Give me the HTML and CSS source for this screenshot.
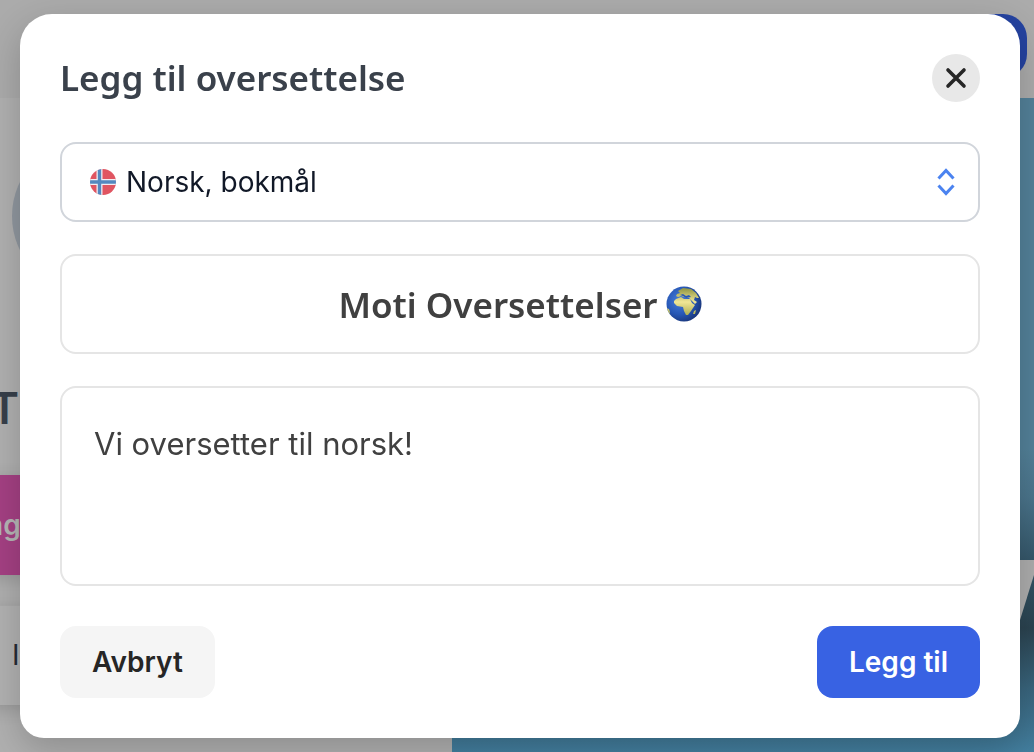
FILE: index.html
```html
<!DOCTYPE html>
<html lang="nb">
<head>
  <meta charset="utf-8">
  <meta name="viewport" content="width=device-width, initial-scale=1">
  <title>Legg til oversettelse</title>
  <link rel="stylesheet" href="styles.css">
</head>
<body>
  <div class="page" aria-hidden="true">
    <div class="topbar"><div class="topbar-button"></div></div>
    <div class="columns">
      <div class="sidebar">
        <div class="avatar"></div>
        <div class="name">Ti</div>
        <div class="banner">ng</div>
        <div class="card">I</div>
      </div>
      <div class="cover">
        <svg class="paper" width="14" height="60" viewBox="0 0 14 60">
          <path d="M0 0H14V15L0 60Z" fill="#adadad"/>
        </svg>
      </div>
    </div>
  </div>

  <div class="overlay">
    <form class="dialog" role="dialog" aria-modal="true" aria-labelledby="dialogTitle">
      <div class="dialog-header">
        <h2 id="dialogTitle">Legg til oversettelse</h2>
        <button type="button" class="close" aria-label="Lukk">
          <svg width="24" height="24" viewBox="0 0 24 24" fill="none" stroke="#262626" stroke-width="3.6" stroke-linecap="round">
            <path d="M4 4L20 20M20 4L4 20"/>
          </svg>
        </button>
      </div>

      <div class="field language">
        <svg class="flag" width="26" height="26" viewBox="0 0 26 26">
          <clipPath id="round"><circle cx="13" cy="13" r="13"/></clipPath>
          <g clip-path="url(#round)">
            <path d="M0 0H26V26H0Z" fill="#e05561"/>
            <path d="M9.5 0V26M0 13H26" stroke="#f2edf2" stroke-width="6"/>
            <path d="M9.5 0V26M0 13H26" stroke="#5488bf" stroke-width="3.4"/>
          </g>
        </svg>
        <select id="language" aria-label="Språk">
          <option>Norsk, bokmål</option>
        </select>
        <svg class="chevrons" width="20" height="28" viewBox="0 0 20 28" fill="none" stroke="#4b83f0" stroke-width="3">
          <path d="M2.5 10.5L10 2.5L17.5 10.5M2.5 17.5L10 25.5L17.5 17.5"/>
        </svg>
      </div>

      <div class="field title">
        <input type="text" id="title" aria-label="Tittel" value="Moti Oversettelser" size="17">
        <svg width="36" height="36" viewBox="0 0 36 36">
          <defs>
            <radialGradient id="sea" cx="38%" cy="40%" r="65%">
              <stop offset="0" stop-color="#477fdb"/>
              <stop offset=".6" stop-color="#2757b5"/>
              <stop offset="1" stop-color="#193477"/>
            </radialGradient>
            <linearGradient id="land" x1="0" y1="0" x2="0" y2="1">
              <stop offset="0" stop-color="#8f9440"/>
              <stop offset=".5" stop-color="#f0e696"/>
              <stop offset="1" stop-color="#a8aa4d"/>
            </linearGradient>
            <clipPath id="globe"><circle cx="18" cy="18" r="17.5"/></clipPath>
          </defs>
          <g clip-path="url(#globe)">
            <path d="M0 0H36V36H0Z" fill="url(#sea)"/>
            <path fill="url(#land)" d="M12 5L17 2L25 3L30 7L33 12L31 12L29 11L28 14L31 16L29 18L26 15L23 12L18 11L15 10L12 11L10 10L11 8L14 7L13 6ZM10 13L15 11L18 13L24 13L26 17L29 19L27 22L25 25L22 29L20 29L18 25L17 21L11 20L8 17L8 15ZM28 25L30 24L29 28L27 28ZM0 22L3 23L4 26L3 29L0 30Z"/>
            <path d="M14 9L17 8L20 10L23 9L25 11L20 12L17 10Z" fill="#2757b5"/>
          </g>
        </svg>
      </div>

      <textarea class="field" id="description" aria-label="Beskrivelse">Vi oversetter til norsk!</textarea>

      <div class="actions">
        <button type="button" class="button">Avbryt</button>
        <button type="submit" class="button primary">Legg til</button>
      </div>
    </form>
  </div>
</body>
</html>
```
FILE: styles.css
```css
* {
  box-sizing: border-box;
}
body {
  margin: 0;
  background: #adadad;
  font-family: Inter, "Liberation Sans", sans-serif;
  overflow: hidden;
}

/* page behind the dialog */
.page {
  display: flex;
  flex-direction: column;
  height: 100vh;
  margin-left: -40px;
}
.topbar {
  display: flex;
  justify-content: flex-end;
  height: 98px;
  flex: none;
  padding: 14px 7px 0;
  background: #ababab;
}
.topbar-button {
  width: 140px;
  height: 64px;
  border-radius: 24px;
  background: #2543a1;
}
.columns {
  display: flex;
  flex: 1;
  min-height: 0;
}
.sidebar {
  width: 492px;
  flex: none;
  padding-top: 40px;
  background: #b0b0b0;
}
.avatar {
  width: 156px;
  height: 156px;
  margin-left: 52px;
  border-radius: 50%;
  background: #90979f;
}
.name {
  margin-top: 88px;
  padding-left: 30px;
  font-size: 44px;
  line-height: 52px;
  font-weight: 600;
  color: #373f4a;
}
.banner {
  margin-top: 41px;
  padding-left: 26px;
  background: #a44083;
  color: #b5b5b5;
  font-size: 28px;
  line-height: 100px;
  font-weight: 600;
  box-shadow: 0 4px 16px rgba(0, 0, 0, 0.15);
}
.card {
  margin-top: 30px;
  padding-left: 52px;
  width: 392px;
  border-top: 1px solid #a9a9a9;
  background: #b1b1b1;
  color: #252c36;
  font-size: 28px;
  line-height: 99px;
  box-shadow: 0 4px 16px rgba(0, 0, 0, 0.15);
}
.cover {
  display: flex;
  flex: 1;
  justify-content: flex-end;
  padding-top: 462px;
  background: linear-gradient(#538199 0, #538199 350px, #4b758c 400px, #35576a 462px, #2b4350 530px, #39657d 590px, #437f9f 100%);
}

/* dialog */
.overlay {
  position: fixed;
  inset: 0;
  padding: 14px 14px 14px 20px;
}
.dialog {
  display: flex;
  flex-direction: column;
  max-width: 1000px;
  margin: 0 auto;
  padding: 40px;
  background: #fff;
  border-radius: 32px 32px 24px 24px;
  box-shadow: 0 12px 36px rgba(0, 0, 0, 0.2);
}
.dialog-header {
  display: flex;
  align-items: center;
  justify-content: space-between;
  margin-bottom: 40px;
}
h2 {
  margin: 0;
  font-family: "Noto Sans", "Open Sans", sans-serif;
  font-size: 35px;
  line-height: 48px;
  font-weight: 600;
  color: #3a414b;
}
button {
  border: none;
  font-family: inherit;
  cursor: pointer;
}
.close {
  display: flex;
  align-items: center;
  justify-content: center;
  width: 48px;
  height: 48px;
  padding: 0;
  border-radius: 50%;
  background: #e8e8e8;
}
.field {
  width: 100%;
  margin-bottom: 32px;
  border: 2px solid #e5e5e5;
  border-radius: 16px;
}
.language {
  display: flex;
  align-items: center;
  height: 80px;
  padding: 0 22px 0 28px;
  border-color: #d1d5db;
}
.flag {
  margin-right: 10px;
}
select {
  flex: 1;
  height: 76px;
  padding: 0;
  border: none;
  outline: none;
  appearance: none;
  background: none;
  font-family: inherit;
  font-size: 28px;
  color: #111827;
}
.title {
  display: flex;
  align-items: center;
  justify-content: center;
  gap: 8px;
  height: 100px;
}
.title input {
  field-sizing: content;
  height: 60px;
  padding: 0;
  border: none;
  outline: none;
  background: none;
  font-family: "Noto Sans", "Open Sans", sans-serif;
  font-size: 35px;
  font-weight: 600;
  color: #404040;
}
textarea {
  display: block;
  height: 200px;
  padding: 32px;
  outline: none;
  resize: none;
  font-family: inherit;
  font-size: 31px;
  line-height: 48px;
  color: #404040;
}
.actions {
  display: flex;
  justify-content: space-between;
  margin-top: 8px;
}
.button {
  height: 72px;
  padding: 0 32px;
  border-radius: 16px;
  background: #f5f5f5;
  color: #262626;
  font-size: 28px;
  font-weight: 600;
}
.primary {
  background: #3862e3;
  color: #fff;
}
```
